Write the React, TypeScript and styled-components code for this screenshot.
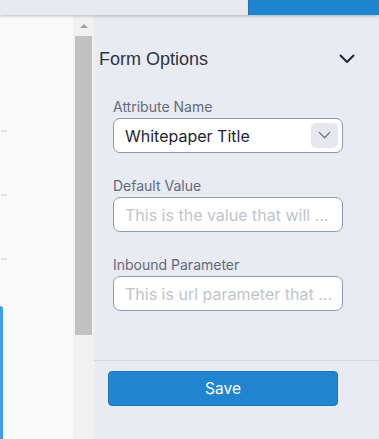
import React from 'react';
import styled, { createGlobalStyle } from 'styled-components';

const GlobalStyle = createGlobalStyle`
  html, body {
    margin: 0;
    padding: 0;
    width: 379px;
    height: 439px;
    overflow: hidden;
    background: #fafafa;
    font-family: Inter, "Liberation Sans", sans-serif;
  }
  * { box-sizing: border-box; }
`;

const Page = styled.div`
  width: 379px;
  height: 439px;
  display: grid;
  grid-template-rows: 15px 1fr;
`;

const TopBar = styled.div`
  display: flex;
  background: #e8eaf0;
  box-shadow: 0 1px 3px rgba(0, 0, 0, 0.25);
  position: relative;
  z-index: 2;
`;

const TopBarFill = styled.div`
  flex: 1;
`;

const TopBarAction = styled.div`
  width: 131px;
  background: #1f84d0;
  border-left: 1px solid #1c74b8;
`;

const Main = styled.div`
  display: grid;
  grid-template-columns: 73px 21px 1fr;
  min-height: 0;
`;

const Canvas = styled.div`
  background: #fafafa;
  display: flex;
  flex-direction: column;
  padding-top: 115px;
  overflow: hidden;
`;

const Tick = styled.div`
  width: 6px;
  height: 2px;
  margin-left: 1px;
  margin-bottom: 62px;
  background: #e2e2e2;
`;

const CardEdge = styled.div`
  width: 3px;
  flex: 1;
  margin-top: -16px;
  background: #3d9ee8;
  border-top-right-radius: 3px;
`;

const Scroll = styled.div`
  background: #f1f1f1;
  display: flex;
  flex-direction: column;
  align-items: center;
  padding-top: 9px;
`;

const ArrowUp = styled.div`
  width: 0;
  height: 0;
  border-left: 4px solid transparent;
  border-right: 4px solid transparent;
  border-bottom: 4px solid #a3a3a3;
`;

const Thumb = styled.div`
  width: 17px;
  height: 299px;
  margin-top: 8px;
  margin-left: -1px;
  background: #c1c1c1;
`;

const Panel = styled.div`
  background: #e8ebf2;
  display: flex;
  flex-direction: column;
`;

const Header = styled.div`
  display: flex;
  align-items: center;
  justify-content: space-between;
  height: 22px;
  margin-top: 33px;
  padding: 0 24px 0 5px;
`;

const Title = styled.h2`
  margin: 0;
  font-family: "Liberation Sans", Arial, sans-serif;
  font-weight: 400;
  font-size: 18px;
  color: #2f3342;
`;

const Fields = styled.div`
  display: flex;
  flex-direction: column;
  gap: 25px;
  margin-top: 29px;
  padding-left: 19px;
  width: 249px;
`;

const Group = styled.div`
  display: flex;
  flex-direction: column;
  gap: 3px;
`;

const Label = styled.label`
  font-size: 14px;
  line-height: 16px;
  color: #636a7b;
`;

const Box = styled.div`
  height: 35px;
  display: flex;
  align-items: center;
  background: #fff;
  border: 1px solid #8e99ad;
  border-radius: 7px;
  padding: 0 4px 0 11px;
`;

const Value = styled.span<{ $placeholder?: boolean }>`
  flex: 1;
  font-size: 16px;
  color: ${(p) => (p.$placeholder ? '#bfc4cc' : '#1f2430')};
  white-space: nowrap;
  overflow: hidden;
`;

const DropButton = styled.div`
  width: 27px;
  height: 25px;
  border-radius: 5px;
  background: #e6e8ed;
  display: flex;
  align-items: center;
  justify-content: center;
`;

const Footer = styled.div`
  margin-top: 49px;
  border-top: 1px solid #d5d8de;
  padding: 10px 0 0 14px;
`;

const SaveButton = styled.button`
  width: 230px;
  height: 35px;
  border: 1px solid #1c76bd;
  border-radius: 4px;
  background: #2084d0;
  color: #fff;
  font-family: Inter, "Liberation Sans", sans-serif;
  font-size: 15.5px;
  cursor: pointer;
`;

const Chevron = ({ size, color, width }: { size: number; color: string; width: number }) => (
  <svg width={size} height={size / 2 + 2} viewBox="0 0 16 10" fill="none">
    <path d="M1.5 1.5 L8 8 L14.5 1.5" stroke={color} strokeWidth={width} strokeLinecap="round" strokeLinejoin="round" />
  </svg>
);

const fields = [
  { label: 'Attribute Name', value: 'Whitepaper Title', select: true },
  { label: 'Default Value', value: 'This is the value that will ...', placeholder: true },
  { label: 'Inbound Parameter', value: 'This is url parameter that ...', placeholder: true },
];

export default function App() {
  return (
    <>
      <GlobalStyle />
      <Page>
        <TopBar>
          <TopBarFill />
          <TopBarAction />
        </TopBar>
        <Main>
          <Canvas>
            <Tick />
            <Tick />
            <Tick />
            <CardEdge />
          </Canvas>
          <Scroll>
            <ArrowUp />
            <Thumb />
          </Scroll>
          <Panel>
            <Header>
              <Title>Form Options</Title>
              <Chevron size={16} color="#1f2533" width={2} />
            </Header>
            <Fields>
              {fields.map((f) => (
                <Group key={f.label}>
                  <Label>{f.label}</Label>
                  <Box>
                    <Value $placeholder={f.placeholder}>{f.value}</Value>
                    {f.select && (
                      <DropButton>
                        <Chevron size={13} color="#6b7385" width={1.6} />
                      </DropButton>
                    )}
                  </Box>
                </Group>
              ))}
            </Fields>
            <Footer>
              <SaveButton>Save</SaveButton>
            </Footer>
          </Panel>
        </Main>
      </Page>
    </>
  );
}
